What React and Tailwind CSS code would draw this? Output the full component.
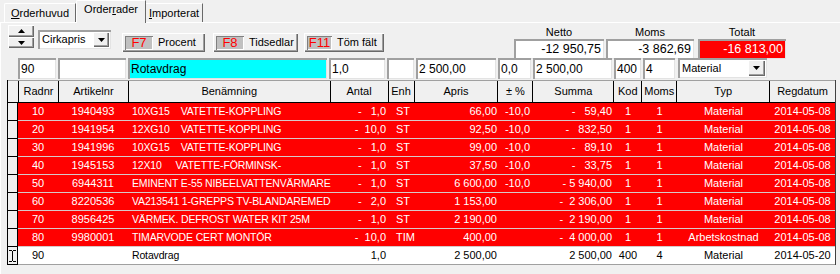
import React from 'react';

const raised = 'shadow-[inset_1px_1px_0_#ffffff,inset_-1px_-1px_0_#696969,inset_-2px_-2px_0_#a0a0a0]';
const sunken = 'shadow-[inset_2px_2px_0_#a0a0a0,inset_-1px_-1px_0_#e3e3e3]';

const cols = [
  { label: 'Radnr', w: 'w-[40px]', cls: 'justify-center' },
  { label: 'Artikelnr', w: 'w-[70px]', cls: 'justify-center' },
  { label: 'Benämning', w: 'w-[202px]', cls: 'justify-start pl-[4px] text-[10.5px] tracking-[-0.15px]' },
  { label: 'Antal', w: 'w-[58px]', cls: 'justify-end pr-[2px]' },
  { label: 'Enh', w: 'w-[26px]', cls: 'justify-start pl-[8px]' },
  { label: 'Apris', w: 'w-[84px]', cls: 'justify-end pr-[1px]' },
  { label: '± %', w: 'w-[35px]', cls: 'justify-end pr-[3px]' },
  { label: 'Summa', w: 'w-[81px]', cls: 'justify-end pr-[2px]' },
  { label: 'Kod', w: 'w-[28px]', cls: 'justify-center' },
  { label: 'Moms', w: 'w-[35px]', cls: 'justify-center' },
  { label: 'Typ', w: 'w-[93px]', cls: 'justify-center' },
  { label: 'Regdatum', w: 'w-[65px]', cls: 'justify-center' },
];

const rows = [
  ['10', '1940493', '10XG15    VATETTE-KOPPLING', '-   1,0', 'ST', '66,00', '-10,0', '-   59,40', '1', '1', 'Material', '2014-05-08'],
  ['20', '1941954', '12XG10    VATETTE-KOPPLING', '-  10,0', 'ST', '92,50', '-10,0', '-   832,50', '1', '1', 'Material', '2014-05-08'],
  ['30', '1941996', '10XG15    VATETTE-KOPPLING', '-   1,0', 'ST', '99,00', '-10,0', '-   89,10', '1', '1', 'Material', '2014-05-08'],
  ['40', '1945153', '12X10     VATETTE-FÖRMINSK-', '-   1,0', 'ST', '37,50', '-10,0', '-   33,75', '1', '1', 'Material', '2014-05-08'],
  ['50', '6944311', 'EMINENT E-55 NIBEELVATTENVÄRMARE', '-   1,0', 'ST', '6 600,00', '-10,0', '- 5 940,00', '1', '1', 'Material', '2014-05-08'],
  ['60', '8220536', 'VA213541 1-GREPPS TV-BLANDAREMED', '-   2,0', 'ST', '1 153,00', '', '-  2 306,00', '1', '1', 'Material', '2014-05-08'],
  ['70', '8956425', 'VÄRMEK. DEFROST WATER KIT 25M', '-   1,0', 'ST', '2 190,00', '', '-  2 190,00', '1', '1', 'Material', '2014-05-08'],
  ['80', '9980001', 'TIMARVODE CERT MONTÖR', '-  10,0', 'TIM', '400,00', '', '-  4 000,00', '1', '1', 'Arbetskostnad', '2014-05-08'],
];

const lastRow = ['90', '', 'Rotavdrag', '1,0', '', '2 500,00', '', '2 500,00', '400', '4', 'Material', '2014-05-20'];

const DownArrow = () => (
  <svg width="7" height="4" viewBox="0 0 7 4"><path d="M0 0h7L3.5 4z" fill="#000" /></svg>
);

const UpArrow = () => (
  <svg width="7" height="4" viewBox="0 0 7 4"><path d="M0 4h7L3.5 0z" fill="#000" /></svg>
);

const IBeam = () => (
  <svg width="7" height="12" viewBox="0 0 7 12">
    <path d="M0 0.5h3M4 0.5h3M3.5 1v10M0 11.5h3M4 11.5h3" stroke="#000" strokeWidth="1" fill="none" />
  </svg>
);

const FButton = ({ fkey, label, w, badgeW }) => (
  <div className={`h-[19px] ${w} bg-[#f0f0f0] ${raised} flex items-center pl-[3px]`}>
    <div className={`h-[14px] ${badgeW} bg-[#c0c0c0] shadow-[inset_1px_1px_0_#808080,inset_-1px_-1px_0_#ffffff] flex items-center justify-center text-[13px] leading-none text-[#ff0000]`}>
      {fkey}
    </div>
    <span className="ml-[5px]">{label}</span>
  </div>
);

const Total = ({ label, value, w, red }) => (
  <div className={`flex flex-col ${w}`}>
    <div className="h-[12px] leading-[12px] text-center">{label}</div>
    <div className={`h-[20px] mt-[1px] ${sunken} ${red ? 'bg-[#ff0000] text-white' : 'bg-white text-black'} flex items-center justify-end pr-[3px] text-[12.5px]`}>
      {value}
    </div>
  </div>
);

const Input = ({ w, children, bg = 'bg-white' }) => (
  <div className={`h-[21px] ${w} mr-[2px] ${bg} ${sunken} flex items-center pl-[3px] text-[12px] whitespace-pre`}>
    {children}
  </div>
);

const Row = ({ data, red, last }) => (
  <div className="flex h-[18px]">
    <div className="w-[11px] h-[18px] bg-[#f0f0f0] border-r border-b border-black flex items-center justify-center">
      {last && <IBeam />}
    </div>
    <div className={`flex flex-1 ${red ? 'bg-[#ff0000] text-white border-b border-[#d8c8c8]' : 'bg-white text-black border-b border-[#a0a0a0]'}`}>
      {cols.map((c, i) => (
        <div key={i} className={`${c.w} ${c.cls} flex items-center whitespace-pre`}>
          {data[i]}
        </div>
      ))}
    </div>
  </div>
);

export default function App() {
  return (
    <div className="w-[840px] h-[274px] bg-[#f0f0f0] font-['Liberation_Sans',Arial,sans-serif] text-[11px] text-black flex flex-col overflow-hidden">
      {/* tabs */}
      <div className="flex items-end h-[23px] pl-[4px] border-b border-white">
        <div className="h-[19px] px-[6px] flex items-center border-t border-l border-white border-r border-r-[#696969] rounded-tl-[2px]">
          <span><span className="underline">O</span>rderhuvud</span>
        </div>
        <div className="h-[23px] px-[7px] pb-[5px] -mb-px relative z-10 bg-[#f0f0f0] flex items-center border-t border-l border-white border-r border-r-[#696969] rounded-tl-[2px]">
          <span>Order<span className="underline">r</span>ader</span>
        </div>
        <div className="h-[19px] px-[3px] flex items-center border-t border-white border-r border-r-[#696969]">
          <span><span className="underline">I</span>mporterat</span>
        </div>
      </div>

      {/* toolbar */}
      <div className="flex items-start h-[35px] pl-[7px] pt-[2px] border-l border-white">
        <div className="flex flex-col w-[26px]">
          <div className={`h-[12px] ${raised} flex items-center justify-center`}><UpArrow /></div>
          <div className={`h-[11px] ${raised} flex items-center justify-center`}><DownArrow /></div>
        </div>
        <div className={`ml-[4px] mt-[5px] w-[73px] h-[19px] bg-white ${sunken} flex items-center pl-[4px] pr-[2px]`}>
          <span className="flex-1">Cirkapris</span>
          <div className={`w-[16px] h-[15px] bg-[#f0f0f0] ${raised} flex items-center justify-center`}><DownArrow /></div>
        </div>
        <div className="ml-[11px] mt-[8px]">
          <FButton fkey="F7" label="Procent" w="w-[83px]" badgeW="w-[28px]" />
        </div>
        <div className="ml-[8px] mt-[8px]">
          <FButton fkey="F8" label="Tidsedlar" w="w-[85px]" badgeW="w-[28px]" />
        </div>
        <div className="ml-[6px] mt-[8px]">
          <FButton fkey="F11" label="Töm fält" w="w-[80px]" badgeW="w-[25px]" />
        </div>
        <div className="ml-[130px] mt-[1px] flex gap-[2px]">
          <Total label="Netto" value="-12 950,75" w="w-[90px]" />
          <Total label="Moms" value="-3 862,69" w="w-[88px]" />
          <div className="ml-[2px]">
            <Total label="Totalt" value="-16 813,00" w="w-[88px]" red />
          </div>
        </div>
      </div>

      {/* edit row */}
      <div className="flex h-[21px] pl-[17px] border-l border-white">
        <Input w="w-[38px]">90</Input>
        <Input w="w-[68px]"></Input>
        <Input w="w-[199px]" bg="bg-[#00ffff]">Rotavdrag</Input>
        <Input w="w-[56px]">1,0</Input>
        <Input w="w-[27px]"></Input>
        <Input w="w-[80px]">2 500,00</Input>
        <Input w="w-[33px]">0,0</Input>
        <Input w="w-[79px]">2 500,00</Input>
        <Input w="w-[27px]">400</Input>
        <Input w="w-[32px]">4</Input>
        <div className={`ml-[1px] h-[20px] w-[89px] bg-white ${sunken} flex items-center pl-[4px] pr-[2px]`}>
          <span className="flex-1">Material</span>
          <div className={`w-[17px] h-[16px] bg-[#f0f0f0] ${raised} flex items-center justify-center`}><DownArrow /></div>
        </div>
      </div>

      {/* grid */}
      <div className="flex-1 border-l border-white pl-[6px]">
        <div className="mt-px w-[829px] border-l border-black border-r border-r-[#404040] flex flex-col">
          <div className="flex h-[23px] bg-[#f0f0f0] border-t border-[#a0a0a0] border-b border-b-black">
            <div className="w-[11px] border-r border-black" />
            {cols.map((c, i) => (
              <div key={i} className={`${c.w} flex items-center justify-center border-r border-black last:border-r-0`}>
                {c.label}
              </div>
            ))}
          </div>
          {rows.map((r, i) => (
            <Row key={i} data={r} red />
          ))}
          <Row data={lastRow} last />
        </div>
      </div>
    </div>
  );
}
